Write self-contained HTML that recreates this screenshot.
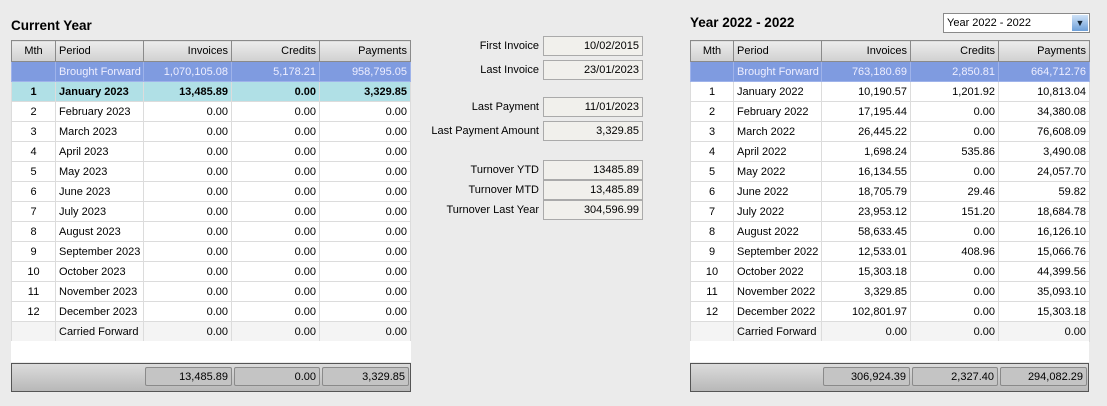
<!DOCTYPE html><html><head><style>
body{margin:0;width:1107px;height:406px;background:#ebebeb;font-family:"Liberation Sans",Arial,sans-serif;font-size:11px;color:#000;position:relative;overflow:hidden}
.t{position:absolute;font-weight:bold;font-size:13.5px}
table{position:absolute;border-collapse:collapse;table-layout:fixed;background:#fff}
td,th{height:18px;line-height:13px;padding:1px 3px 0;border:1px solid #dcdcdc;white-space:nowrap;overflow:hidden;font-weight:normal;text-align:right}
th{background:linear-gradient(#ececec,#d0d0d0);border:1px solid #8a8a8a;height:19px}
td:nth-child(1),th:nth-child(1){text-align:center}
td:nth-child(2),th:nth-child(2){text-align:left}
tr.cf td{background:#f4f4f4}
tr.bf td{background:#7f9be0;color:#eef;border-color:#9fb3ea}
tr.cur td{background:#b0e0e6;font-weight:bold}
.blank{position:absolute;background:#fff;height:21px}
.foot{position:absolute;height:27px;border:1px solid #555;background:linear-gradient(#dcdcdc,#b8b8b8)}
.fc{position:absolute;top:3px;height:19px;border:1px solid #8a8a8a;border-radius:2px;background:#c4c4c4;text-align:right;line-height:19px;padding-right:3px;box-sizing:border-box}
.lab{position:absolute;right:568px;text-align:right;line-height:20px}
.box{position:absolute;left:543px;width:100px;height:20px;box-sizing:border-box;border:1px solid #aaa;background:#f1f0ec;text-align:right;padding-right:3px;line-height:18px}
.sel{position:absolute;left:943px;top:13px;width:147px;height:20px;box-sizing:border-box;border:1px solid #8a8a8a;background:#fff;line-height:18px;padding-left:3px}
.sel b{position:absolute;right:1px;top:1px;width:16px;height:16px;background:linear-gradient(#cfe3f8,#6d9fd8);font-size:9px;text-align:center;line-height:16px;color:#123}
</style></head><body>
<div class="t" style="left:11px;top:18px">Current Year</div>
<div class="t" style="left:690px;top:15px">Year 2022 - 2022</div>
<div class="sel">Year 2022 - 2022<b>▼</b></div>

<table style="left:11px;top:40px;width:400px">
<colgroup><col style="width:44px"><col style="width:88px"><col style="width:88px"><col style="width:88px"><col style="width:91px"></colgroup>
<tr><th>Mth</th><th>Period</th><th>Invoices</th><th>Credits</th><th>Payments</th></tr>
<tr class="bf"><td></td><td>Brought Forward</td><td>1,070,105.08</td><td>5,178.21</td><td>958,795.05</td></tr>
<tr class="cur"><td>1</td><td>January 2023</td><td>13,485.89</td><td>0.00</td><td>3,329.85</td></tr>
<tr><td>2</td><td>February 2023</td><td>0.00</td><td>0.00</td><td>0.00</td></tr>
<tr><td>3</td><td>March 2023</td><td>0.00</td><td>0.00</td><td>0.00</td></tr>
<tr><td>4</td><td>April 2023</td><td>0.00</td><td>0.00</td><td>0.00</td></tr>
<tr><td>5</td><td>May 2023</td><td>0.00</td><td>0.00</td><td>0.00</td></tr>
<tr><td>6</td><td>June 2023</td><td>0.00</td><td>0.00</td><td>0.00</td></tr>
<tr><td>7</td><td>July 2023</td><td>0.00</td><td>0.00</td><td>0.00</td></tr>
<tr><td>8</td><td>August 2023</td><td>0.00</td><td>0.00</td><td>0.00</td></tr>
<tr><td>9</td><td>September 2023</td><td>0.00</td><td>0.00</td><td>0.00</td></tr>
<tr><td>10</td><td>October 2023</td><td>0.00</td><td>0.00</td><td>0.00</td></tr>
<tr><td>11</td><td>November 2023</td><td>0.00</td><td>0.00</td><td>0.00</td></tr>
<tr><td>12</td><td>December 2023</td><td>0.00</td><td>0.00</td><td>0.00</td></tr>
<tr class="cf"><td></td><td>Carried Forward</td><td>0.00</td><td>0.00</td><td>0.00</td></tr>
</table>
<div class="blank" style="left:11px;top:341px;width:400px"></div>
<div class="foot" style="left:11px;top:363px;width:398px">
<div class="fc" style="left:133px;width:87px">13,485.89</div>
<div class="fc" style="left:222px;width:86px">0.00</div>
<div class="fc" style="left:310px;width:87px">3,329.85</div>
</div>

<table style="left:690px;top:40px;width:399px">
<colgroup><col style="width:43px"><col style="width:88px"><col style="width:89px"><col style="width:88px"><col style="width:91px"></colgroup>
<tr><th>Mth</th><th>Period</th><th>Invoices</th><th>Credits</th><th>Payments</th></tr>
<tr class="bf"><td></td><td>Brought Forward</td><td>763,180.69</td><td>2,850.81</td><td>664,712.76</td></tr>
<tr><td>1</td><td>January 2022</td><td>10,190.57</td><td>1,201.92</td><td>10,813.04</td></tr>
<tr><td>2</td><td>February 2022</td><td>17,195.44</td><td>0.00</td><td>34,380.08</td></tr>
<tr><td>3</td><td>March 2022</td><td>26,445.22</td><td>0.00</td><td>76,608.09</td></tr>
<tr><td>4</td><td>April 2022</td><td>1,698.24</td><td>535.86</td><td>3,490.08</td></tr>
<tr><td>5</td><td>May 2022</td><td>16,134.55</td><td>0.00</td><td>24,057.70</td></tr>
<tr><td>6</td><td>June 2022</td><td>18,705.79</td><td>29.46</td><td>59.82</td></tr>
<tr><td>7</td><td>July 2022</td><td>23,953.12</td><td>151.20</td><td>18,684.78</td></tr>
<tr><td>8</td><td>August 2022</td><td>58,633.45</td><td>0.00</td><td>16,126.10</td></tr>
<tr><td>9</td><td>September 2022</td><td>12,533.01</td><td>408.96</td><td>15,066.76</td></tr>
<tr><td>10</td><td>October 2022</td><td>15,303.18</td><td>0.00</td><td>44,399.56</td></tr>
<tr><td>11</td><td>November 2022</td><td>3,329.85</td><td>0.00</td><td>35,093.10</td></tr>
<tr><td>12</td><td>December 2022</td><td>102,801.97</td><td>0.00</td><td>15,303.18</td></tr>
<tr class="cf"><td></td><td>Carried Forward</td><td>0.00</td><td>0.00</td><td>0.00</td></tr>
</table>
<div class="blank" style="left:690px;top:341px;width:399px"></div>
<div class="foot" style="left:690px;top:363px;width:397px">
<div class="fc" style="left:132px;width:87px">306,924.39</div>
<div class="fc" style="left:221px;width:86px">2,327.40</div>
<div class="fc" style="left:309px;width:87px">294,082.29</div>
</div>

<div class="lab" style="top:36px">First Invoice</div><div class="box" style="top:36px">10/02/2015</div>
<div class="lab" style="top:60px">Last Invoice</div><div class="box" style="top:60px">23/01/2023</div>
<div class="lab" style="top:97px">Last Payment</div><div class="box" style="top:97px">11/01/2023</div>
<div class="lab" style="top:121px">Last Payment Amount</div><div class="box" style="top:121px">3,329.85</div>
<div class="lab" style="top:160px">Turnover YTD</div><div class="box" style="top:160px">13485.89</div>
<div class="lab" style="top:180px">Turnover MTD</div><div class="box" style="top:180px">13,485.89</div>
<div class="lab" style="top:200px">Turnover Last Year</div><div class="box" style="top:200px">304,596.99</div>
</body></html>
